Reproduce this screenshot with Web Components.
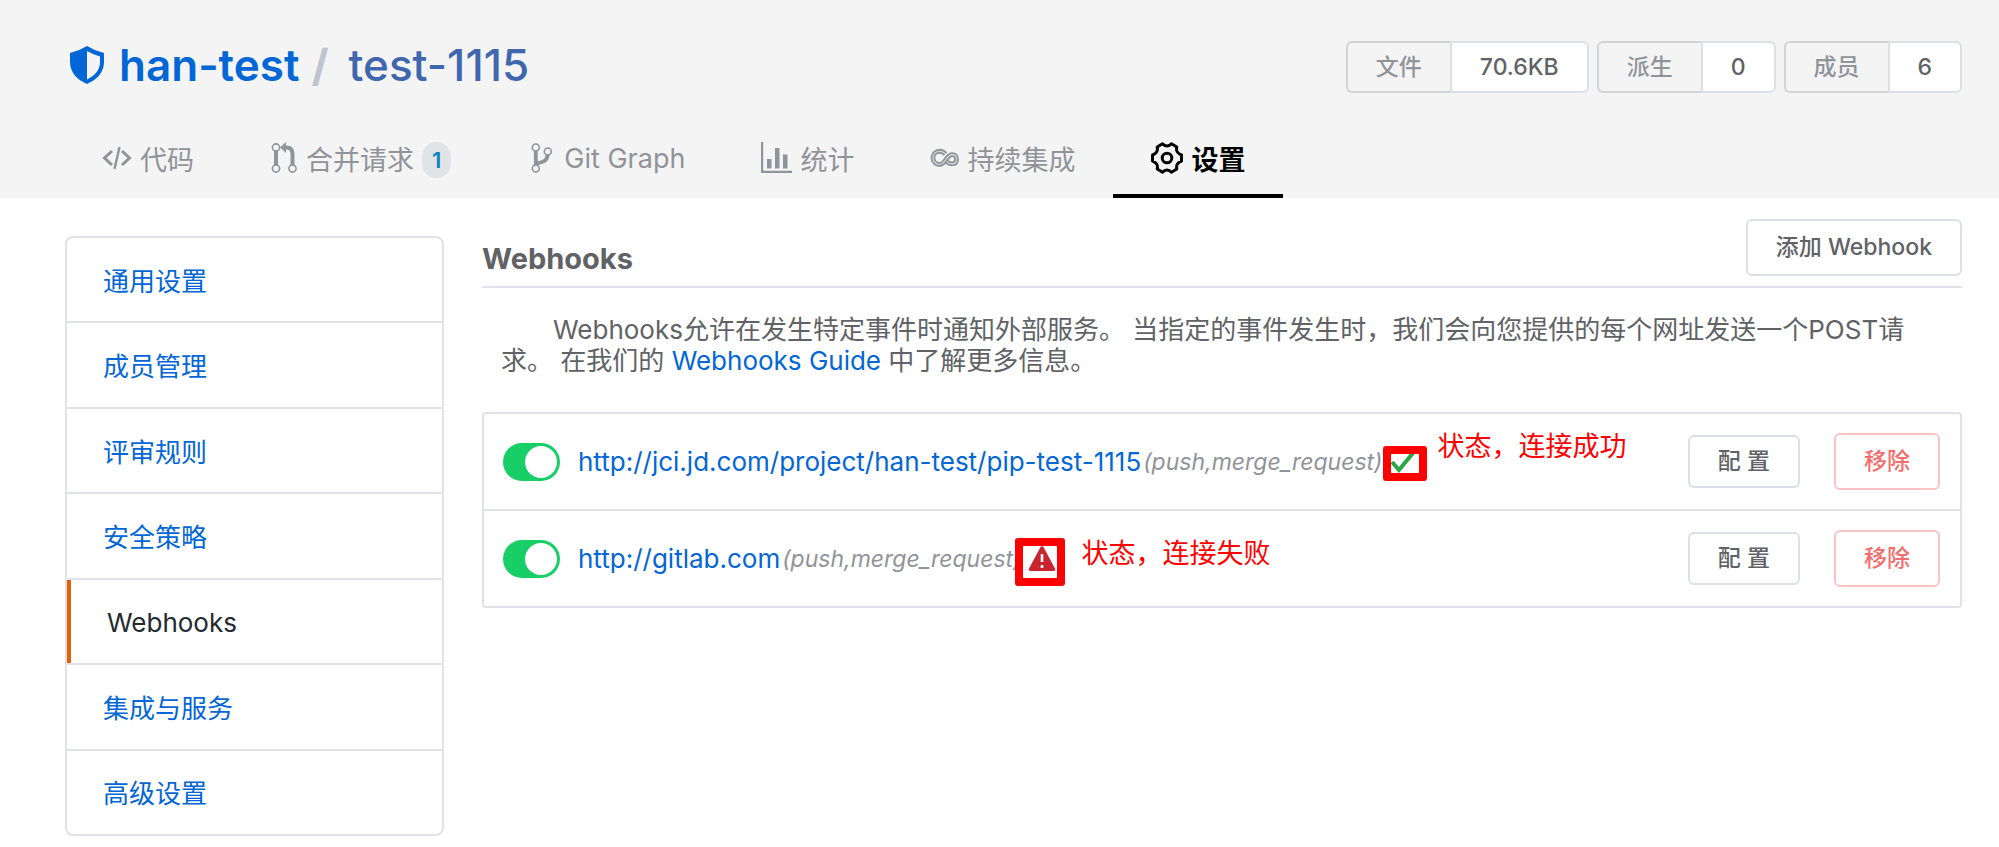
<!DOCTYPE html>
<html lang="zh-CN">
<head>
<meta charset="utf-8">
<meta name="viewport" content="width=device-width, initial-scale=1">
<title>han-test / test-1115 · Webhooks</title>
<style>
  body {
    margin: 0;
    background: #fff;
    color: #606266;
    font-family: Inter, "Noto Sans CJK SC", sans-serif;
    font-size: 26px;
    --link: #0366d6;
    --line: #e1e1ea;
    --control: #dcdfe6;
    --gutter: 37px;
  }
</style>
</head>
<body>
<repo-page>
  <repo-header slot="header" owner="han-test" repo="test-1115">
    <repo-stat slot="stats" label="文件">70.6KB</repo-stat>
    <repo-stat slot="stats" label="派生">0</repo-stat>
    <repo-stat slot="stats" label="成员">6</repo-stat>
    <repo-tab slot="tabs" icon="code">代码</repo-tab>
    <repo-tab slot="tabs" icon="pull" badge="1">合并请求</repo-tab>
    <repo-tab slot="tabs" icon="branch">Git Graph</repo-tab>
    <repo-tab slot="tabs" icon="chart">统计</repo-tab>
    <repo-tab slot="tabs" icon="loop">持续集成</repo-tab>
    <repo-tab slot="tabs" icon="gear" active>设置</repo-tab>
  </repo-header>
  <settings-nav slot="nav">
    <nav-item>通用设置</nav-item>
    <nav-item>成员管理</nav-item>
    <nav-item>评审规则</nav-item>
    <nav-item>安全策略</nav-item>
    <nav-item active>Webhooks</nav-item>
    <nav-item>集成与服务</nav-item>
    <nav-item>高级设置</nav-item>
  </settings-nav>
  <webhook-panel>
    <hook-row url="http://jci.jd.com/project/han-test/pip-test-1115" events="(push,merge_request)" status="ok">状态，连接成功</hook-row>
    <hook-row url="http://gitlab.com" events="(push,merge_request)" status="failed">状态，连接失败</hook-row>
  </webhook-panel>
</repo-page>

<script>
const ICONS = {
  shield: `<svg width="36" height="40" viewBox="0 0 36 40"><path d="M18 1 Q26 6 35 8 V17 C35 28 27 35 18 39 C9 35 1 28 1 17 V8 Q10 6 18 1Z" fill="#0366d6"/><path d="M18 6 Q25 10 31 11.500 V17 C31 26 25 31 18 34.500Z" fill="#f4f4f4"/></svg>`,
  code: `<svg width="30" height="24" viewBox="0 0 30 24" fill="none" stroke="currentColor" stroke-width="3"><path d="M10 5 2.500 12 10 19M20 5l7.500 7L20 19"/><path d="M17.500 1 12.500 23" stroke-width="2.400"/></svg>`,
  pull: `<svg width="28" height="32" viewBox="-1 0 28 32" fill="none" stroke="currentColor"><path d="M5 9v14M21.500 23V12q0-6.500-6-6.500H14" stroke-width="4"/><path d="M15 0v11L9 5.500Z" fill="currentColor" stroke="none"/><g stroke-width="1.600"><circle cx="5" cy="5.500" r="3.600"/><circle cx="5" cy="26.500" r="3.600"/><circle cx="21.500" cy="26.500" r="3.600"/></g></svg>`,
  branch: `<svg width="29" height="30" viewBox="-4 0 29 30" fill="none" stroke="currentColor"><path d="M4.800 8v14M16.500 12c0 5-3 7-11 8.500" stroke-width="3.800"/><g stroke-width="1.600"><circle cx="4.800" cy="4.500" r="3.500"/><circle cx="4.800" cy="25.500" r="3.500"/><circle cx="16.800" cy="8.500" r="3.500" fill="#f4f4f4"/></g></svg>`,
  chart: `<svg width="31" height="32" viewBox="0 0 31 32" fill="currentColor"><path d="M0 0h2.200v28.800H31V31H0ZM6 17h4.500v9.500H6ZM14 6h4.500v20.500H14ZM22 12.500h4.500v14H22Z"/></svg>`,
  loop: `<svg width="29" height="20" viewBox="0 0 30 20" fill="none"><path d="M16 6C14 3.500 12.500 3 10 3 6 3 3 6 3 9.800s3 6.900 7 6.900c6 0 7-10.200 13-10.200 3 0 4.500 2 4.500 4.700S26 16 22.500 16c-2.500 0-4-.8-5-2.200" stroke="currentColor" stroke-width="5"/><path d="M16 6C14 3.500 12.500 3 10 3 6 3 3 6 3 9.800s3 6.900 7 6.900c6 0 7-10.200 13-10.200 3 0 4.500 2 4.500 4.700S26 16 22.500 16c-2.500 0-4-.8-5-2.200" stroke="#d8d8dc" stroke-width="1.200"/></svg>`,
  gear: `<svg width="32" height="32" viewBox="0 0 32 32" fill="none" stroke="currentColor" stroke-width="3" stroke-linejoin="round"><path d="M16 4 Q18.500 4 20.500 1.800L25.800 5Q25 8 26.400 10T30.500 13v6Q27.600 20 26.400 22T25.800 27L20.500 30.200Q18.500 28 16 28T11.500 30.200L6.200 27Q7 24 5.600 22T1.500 19v-6Q4.400 12 5.600 10T6.200 5L11.500 1.800Q13.500 4 16 4Z"/><circle cx="16" cy="16" r="4.800"/></svg>`,
  ok: `<svg width="28" height="26" viewBox="0 0 28 26" fill="none"><path d="M3 13l7 8L24 4" stroke="#28a745" stroke-width="4"/></svg>`,
  failed: `<svg width="28" height="26" viewBox="0 0 28 26"><path d="M12.300 1.500q1.700-2.500 3.400 0L27 22.500q.8 2.500-2 2.500H3q-2.800 0-2-2.500Z" fill="#cb2431"/><path d="M14 8v8M14 19v3" stroke="#fff" stroke-width="2.600"/></svg>`
};

const define = (name, render) => customElements.define(name, class extends HTMLElement {
  connectedCallback() {
    if (this.shadowRoot) return;
    this.attachShadow({ mode: "open" }).innerHTML = render(this);
  }
});

define("repo-page", () => `
  <style>
    :host { display: block; }
    .body { display: grid; grid-template-columns: 379px minmax(0, 1fr); gap: 38px; align-items: start; padding: 20px var(--gutter) 0 65px; }
    slot[name=nav] { display: block; padding-top: 18px; }
  </style>
  <slot name="header"></slot>
  <div class="body"><slot name="nav"></slot><main><slot></slot></main></div>`);

define("repo-header", el => `
  <style>
    :host { display: block; background: #f4f4f4; }
    .top { display: flex; align-items: center; justify-content: space-between; padding: 35px var(--gutter) 0 69px; }
    h1 { display: flex; align-items: center; margin: 0; font-size: 44px; line-height: 60px; font-weight: 500; }
    svg { display: block; margin-right: 14px; }
    a { text-decoration: none; color: #4067ad; }
    .owner { color: var(--link); font-weight: 600; }
    .sep { color: #bfc4ce; font-weight: 700; padding: 0 20px 0 12px; }
    .stats { display: flex; gap: 8px; padding-top: 4px; }
    nav { display: flex; padding: 27px 64px 0; }
  </style>
  <header>
    <div class="top">
      <h1>${ICONS.shield}<a class="owner" href="#owner">${el.getAttribute("owner")}</a><span class="sep">/</span><a href="#repo">${el.getAttribute("repo")}</a></h1>
      <div class="stats"><slot name="stats"></slot></div>
    </div>
    <nav><slot name="tabs"></slot></nav>
  </header>`);

define("repo-stat", el => `
  <style>
    :host { display: flex; font-size: 23px; line-height: 48px; font-weight: 500; text-align: center; }
    span { box-sizing: border-box; border: 2px solid var(--control); padding: 0 28px; }
    .label { background: #f4f4f5; color: #909399; border-color: #d3d4d6; border-right: 0; border-radius: 6px 0 0 6px; }
    .value { background: #fff; border-radius: 0 6px 6px 0; }
  </style>
  <span class="label">${el.getAttribute("label")}</span><span class="value"><slot></slot></span>`);

define("repo-tab", el => `
  <style>
    :host { display: block; }
    a { display: flex; align-items: center; gap: 8px; height: 72px; padding: 0 38px; border-bottom: 4px solid transparent; color: #909399; font-size: 27px; text-decoration: none; white-space: nowrap; }
    :host([active]) a { color: #000; border-color: #000; font-weight: 700; }
    svg { display: block; flex: none; }
    .badge { margin-top: 4px; background: #e2e3e6; color: #0a84c1; border-radius: 15px; padding: 0 10px; font-size: 22px; line-height: 36px; font-weight: 600; }
  </style>
  <a href="#${el.getAttribute("icon")}">${ICONS[el.getAttribute("icon")]}<slot></slot>${el.hasAttribute("badge") ? `<span class="badge">${el.getAttribute("badge")}</span>` : ""}</a>`);

define("settings-nav", () => `
  <style>
    :host { display: block; }
    nav { box-sizing: border-box; display: flex; flex-direction: column; min-height: 600px; border: 2px solid var(--line); border-radius: 8px; overflow: hidden; }
    ::slotted(*) { flex: 1 0 auto; }
    ::slotted(:not(:last-child)) { border-bottom: 2px solid var(--line); }
  </style>
  <nav><slot></slot></nav>`);

define("nav-item", el => `
  <style>
    :host { display: flex; }
    a { flex: 1; display: flex; align-items: center; padding: 4px 36px 0; color: var(--link); line-height: 32px; text-decoration: none; }
    :host([active]) a { color: #24292e; border-left: 4px solid #e36209; }
  </style>
  <a href="#settings"${el.hasAttribute("active") ? ' aria-current="page"' : ""}><slot></slot></a>`);

define("ui-button", () => `
  <style>
    :host { display: block; }
    button { display: block; font: inherit; font-size: 23px; line-height: 53px; font-weight: 500; color: #606266; background: #fff; border: 2px solid var(--control); border-radius: 6px; padding: 0 28px; white-space: nowrap; }
    :host([small]) button { line-height: 49px; }
    :host([danger]) button { color: #f56c6c; border-color: #fbc4c4; }
  </style>
  <button type="button"><slot></slot></button>`);

define("ui-switch", el => `
  <style>
    :host { display: block; flex: none; }
    input { appearance: none; display: flex; box-sizing: border-box; margin: 0; width: 57px; height: 38px; padding: 3px; border-radius: 19px; background: #c0c4cc; }
    input::before { content: ""; width: 32px; height: 32px; border-radius: 50%; background: #fff; }
    input:checked { background: #18ce66; justify-content: flex-end; }
  </style>
  <input type="checkbox" role="switch" checked aria-label="${el.getAttribute("label")}">`);

define("webhook-panel", () => `
  <style>
    :host { display: block; }
    .head { display: flex; align-items: center; justify-content: space-between; padding-bottom: 10px; border-bottom: 2px solid var(--line); }
    h2 { margin: 0; padding-top: 24px; font-size: 29px; line-height: 34px; font-weight: 700; }
    p { margin: 26px 19px 36px; text-indent: 2em; line-height: 31px; }
    a { color: var(--link); text-decoration: none; }
    .list { border: 2px solid var(--line); border-radius: 4px; }
    ::slotted(:not(:last-child)) { border-bottom: 2px solid var(--line); }
  </style>
  <div class="head"><h2>Webhooks</h2><ui-button>添加 Webhook</ui-button></div>
  <p>Webhooks允许在发生特定事件时通知外部服务。 当指定的事件发生时，我们会向您提供的每个网址发送一个POST请求。 在我们的 <a href="#guide">Webhooks Guide</a> 中了解更多信息。</p>
  <div class="list"><slot></slot></div>`);

define("hook-row", el => `
  <style>
    :host { display: flex; align-items: center; height: 95px; padding: 0 20px 0 19px; }
    .url { margin-left: 18px; color: var(--link); text-decoration: none; }
    em { color: #909399; font-size: 23px; margin-left: 2px; }
    .status { position: relative; display: flex; margin-left: 7px; }
    .mark { position: absolute; box-sizing: border-box; border: 8px solid #f00; border-radius: 3px; }
    .note { position: absolute; color: #f00; font-size: 27px; line-height: 32px; white-space: nowrap; }
    :host([status=ok]) .mark { left: -6px; top: -3px; width: 44px; height: 35px; }
    :host([status=ok]) .note { left: 48px; top: -18px; }
    :host([status=failed]) .mark { left: -13px; top: -8px; width: 50px; height: 48px; }
    :host([status=failed]) .note { left: 53px; top: -8px; }
    .actions { display: flex; align-items: center; gap: 34px; margin-left: auto; }
  </style>
  <ui-switch label="${el.getAttribute("url")}"></ui-switch>
  <a class="url" href="#hook">${el.getAttribute("url")}</a><em>${el.getAttribute("events")}</em>
  <span class="status">${ICONS[el.getAttribute("status")]}<span class="mark"></span><span class="note"><slot></slot></span></span>
  <div class="actions"><ui-button small>配 置</ui-button><ui-button danger>移除</ui-button></div>`);
</script>
</body>
</html>
